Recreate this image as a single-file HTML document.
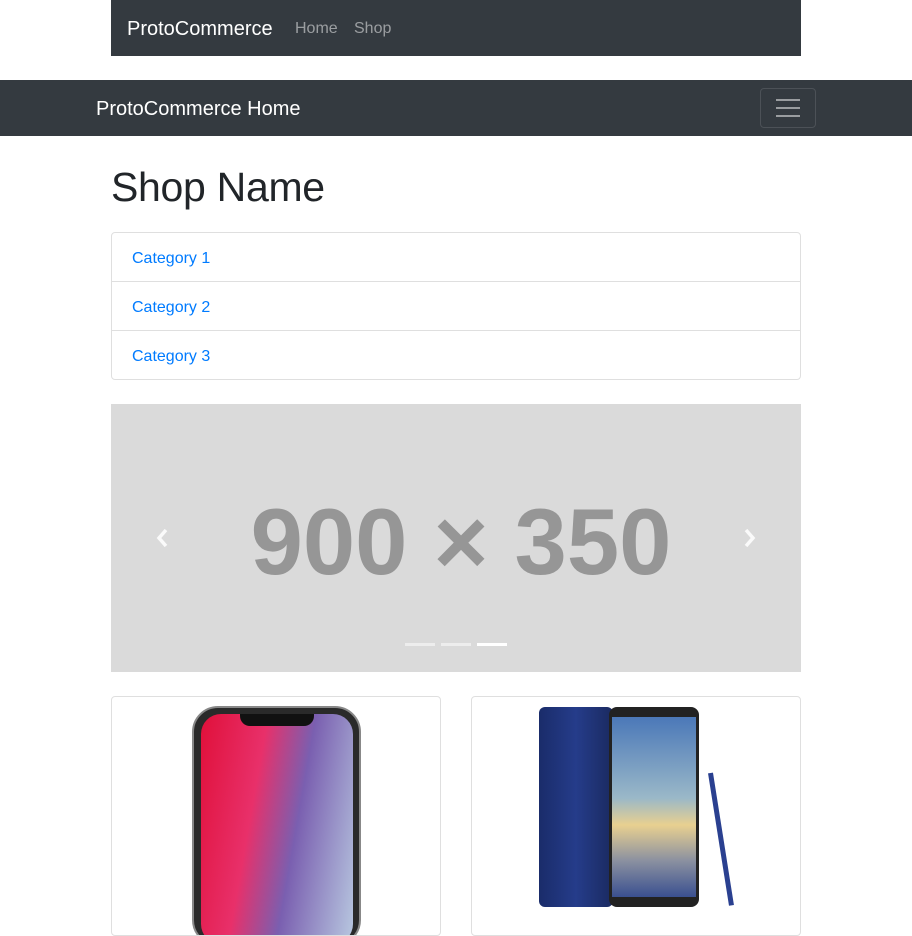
<!DOCTYPE html>
<html><head><meta charset="utf-8"><style>
*{box-sizing:border-box;margin:0;padding:0}
body{width:912px;height:924px;overflow:hidden;background:#fff;font-family:"Liberation Sans",sans-serif;color:#212529;position:relative}
.abs{position:absolute}
.nav1{left:111px;top:0;width:690px;height:56px;background:#343a40}
.nav2{left:0;top:80px;width:912px;height:56px;background:#343a40}
.brand{color:#fff;font-size:20px}
.link{color:rgba(255,255,255,.5);font-size:16px}
.tog{left:760px;top:88px;width:56px;height:40px;border:1px solid rgba(255,255,255,.12);border-radius:4px}
.tog i{position:absolute;left:15px;width:24px;height:2px;background:rgba(255,255,255,.5)}
h1{position:absolute;left:111px;top:164px;font-size:41px;font-weight:normal;letter-spacing:-0.3px}
.lg{left:111px;top:232px;width:690px;height:148px;border:1px solid rgba(0,0,0,.125);border-radius:4px}
.lg div{height:49px;border-bottom:1px solid rgba(0,0,0,.125);padding:17px 20px 0;color:#007bff;font-size:16px}
.lg div:last-child{border-bottom:0}
.car{left:111px;top:404px;width:690px;height:268px;background:#dadada}
.card{top:696px;width:330px;height:240px;border:1px solid rgba(0,0,0,.125);border-radius:4px;overflow:hidden}
</style></head><body>
<div class="abs nav1"></div>
<div class="abs brand" style="left:127px;top:18px">ProtoCommerce</div>
<div class="abs link" style="left:295px;top:20px">Home</div>
<div class="abs link" style="left:354px;top:20px">Shop</div>
<div class="abs nav2"></div>
<div class="abs brand" style="left:96px;top:98px">ProtoCommerce Home</div>
<div class="abs tog"><i style="top:10px"></i><i style="top:18px"></i><i style="top:26px"></i></div>
<h1>Shop Name</h1>
<div class="abs lg"><div>Category 1</div><div>Category 2</div><div>Category 3</div></div>
<div class="abs car">
<div class="abs" style="left:0;top:84px;width:700px;text-align:center;font-size:94px;font-weight:bold;color:#969696;letter-spacing:0">900 × 350</div>
<svg class="abs" style="left:43px;top:123px" width="18" height="22"><path d="M12 3 L5 11 L12 19" stroke="#fff" stroke-width="3.5" fill="none" opacity=".85"/></svg>
<svg class="abs" style="left:629px;top:123px" width="18" height="22"><path d="M6 3 L13 11 L6 19" stroke="#fff" stroke-width="3.5" fill="none" opacity=".85"/></svg>
<div class="abs" style="left:294px;top:239px;width:30px;height:3px;background:rgba(255,255,255,.5)"></div>
<div class="abs" style="left:330px;top:239px;width:30px;height:3px;background:rgba(255,255,255,.5)"></div>
<div class="abs" style="left:366px;top:239px;width:30px;height:3px;background:#fff"></div>
</div>
<div class="abs card" style="left:111px">
<div class="abs" style="left:80px;top:9px;width:169px;height:240px;background:#2a2a2a;border-radius:26px;border:2px solid #888"></div>
<div class="abs" style="left:89px;top:17px;width:152px;height:230px;border-radius:20px;background:linear-gradient(100deg,#e0103a 0%,#e8306a 35%,#7a5fb0 60%,#b8c8e0 100%)"></div>
<div class="abs" style="left:128px;top:17px;width:74px;height:12px;background:#111;border-radius:0 0 10px 10px"></div>
</div>
<div class="abs card" style="left:471px">
<div class="abs" style="left:67px;top:10px;width:74px;height:200px;background:linear-gradient(90deg,#1a2c6a,#253c8a,#1a2a60);border-radius:6px"></div>
<div class="abs" style="left:137px;top:10px;width:90px;height:200px;background:#222;border-radius:8px"></div>
<div class="abs" style="left:140px;top:20px;width:84px;height:180px;background:linear-gradient(180deg,#4b78b8 0%,#9ab8c8 45%,#e8d090 60%,#8a90a0 80%,#3a5090 100%)"></div>
<div class="abs" style="left:236px;top:76px;width:5px;height:134px;background:#2a4090;transform:rotate(-9deg);transform-origin:top"></div>
</div>
</body></html>
